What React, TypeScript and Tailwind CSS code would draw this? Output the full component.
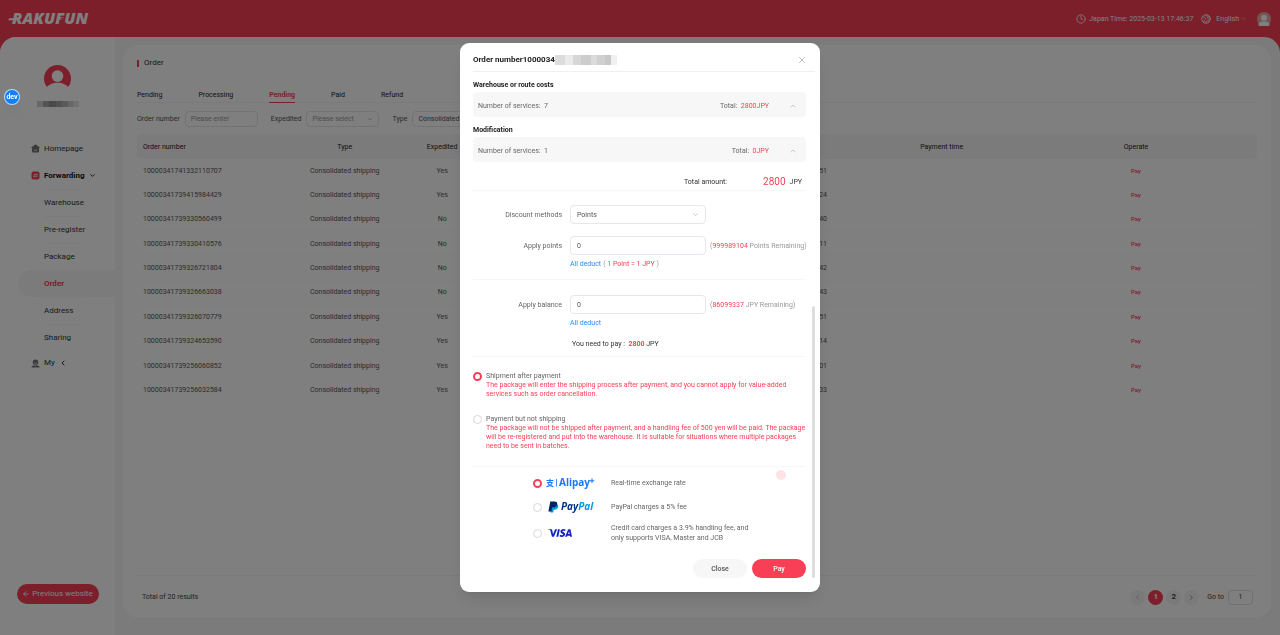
import React, { useState } from "react";
import { ArrowLeft, ChevronDown, ChevronLeft, ChevronRight, ChevronUp, Clock, X } from "lucide-react";
import { SiVisa } from "react-icons/si";

type OrderRow = {
  id: string;
  expedited: boolean;
  createdAt: string;
};

const orders: OrderRow[] = [
  { id: "10000341741332110707", expedited: true, createdAt: "2025-03-07 16:21:51" },
  { id: "10000341739415984429", expedited: true, createdAt: "2025-02-13 12:06:24" },
  { id: "10000341739330560499", expedited: false, createdAt: "2025-02-12 12:22:40" },
  { id: "10000341739330410576", expedited: false, createdAt: "2025-02-12 12:20:11" },
  { id: "10000341739326721804", expedited: false, createdAt: "2025-02-12 11:18:42" },
  { id: "10000341739326663038", expedited: false, createdAt: "2025-02-12 11:17:43" },
  { id: "10000341739326070779", expedited: true, createdAt: "2025-02-12 11:07:51" },
  { id: "10000341739324653590", expedited: true, createdAt: "2025-02-12 10:44:14" },
  { id: "10000341739256060852", expedited: true, createdAt: "2025-02-11 15:41:01" },
  { id: "10000341739256032584", expedited: true, createdAt: "2025-02-11 15:40:33" },
];

const subMenu = ["Warehouse", "Pre-register", "Package", "Order", "Address", "Sharing"];

const tabs = ["Pending", "Processing", "Pending", "Paid", "Refund"];
const activeTab = 2;

function Logo() {
  return (
    <svg width="92" height="26" viewBox="0 -4 92 26" role="img" aria-label="Rakufun">
      <text
        x="4"
        y="14"
        fill="#fff"
        fontFamily="'Open Sans', sans-serif"
        fontSize="16"
        fontWeight="800"
        fontStyle="italic"
      >
        RAKUFUN
      </text>
      <path d="M1 8.200h7l-.6 2H.4z" fill="#fff" />
      <circle cx="54" cy="8.600" r="1.200" fill="#f93f55" />
    </svg>
  );
}

function UserAvatar({ size, color, face }: { size: number; color: string; face: string }) {
  return (
    <svg width={size} height={size} viewBox="0 0 28 28" aria-hidden="true">
      <circle cx="14" cy="14" r="14" fill={color} />
      <circle cx="14" cy="11.500" r="6" fill={face} />
      <path d="M2.500 24C4 20.500 9 18.500 14 18.500S24 20.500 25.500 24L24 28H4z" fill={face} />
    </svg>
  );
}

function Globe() {
  return (
    <svg width="10" height="10" viewBox="0 0 20 20" fill="none" stroke="#fff" strokeWidth="1.800" aria-hidden="true">
      <circle cx="10" cy="10" r="8.500" />
      <path d="M3 6c4 0 6 1 6 3.500S5 13 6 17M17.500 6c-3-1-5 0-4 2.500s4 1.500 5 2M9 2.500c1 2 3 2 5 1M10 18c0-4 2-5.500 6-4" />
    </svg>
  );
}

function HomeIcon() {
  return (
    <svg width="9" height="9" viewBox="0 0 18 18" aria-hidden="true">
      <path d="M9 .5 17.500 7c.4.400.3 1-.3 1H16v7.500c0 1-.6 1.500-1.500 1.500h-11C2.600 17 2 16.500 2 15.500V8H.8C.2 8 .1 7.400.5 7z" fill="#777" />
      <path d="M6 12.500h6" stroke="#fff" strokeWidth="1.500" />
    </svg>
  );
}

function ForwardIcon() {
  return (
    <svg width="9" height="9" viewBox="0 0 18 18" aria-hidden="true">
      <rect x="1" y="1" width="16" height="16" rx="4" fill="#f93f55" />
      <path d="M5 7.500h8L10.500 5M13 10.500H5L7.500 13" stroke="#fff" strokeWidth="1.600" fill="none" />
    </svg>
  );
}

function MyIcon() {
  return (
    <svg width="9" height="9" viewBox="0 0 18 18" aria-hidden="true">
      <circle cx="9" cy="6.500" r="5.500" fill="#777" />
      <path d="M6 7.500c1.500 2 4.500 2 6 0" stroke="#fff" strokeWidth="1.300" fill="none" />
      <path d="M1 17c0-3 2-4 4-4h8c2 0 4 1 4 4z" fill="#777" />
    </svg>
  );
}

function Header() {
  return (
    <header className="flex h-[37px] items-center justify-between pr-[9px] pl-2">
      <Logo />
      <div className="flex items-center text-white">
        <Clock size={10} strokeWidth={2} />
        <span className="ml-[3px]">Japan Time: 2025-03-13 17:46:37</span>
        <span className="ml-2">
          <Globe />
        </span>
        <button type="button" className="ml-[5px] flex items-center gap-px">
          English
          <ChevronDown size={7} strokeWidth={1.5} />
        </button>
        <span className="ml-[10px]">
          <UserAvatar size={14} color="#e8a9a9" face="#fff" />
        </span>
      </div>
    </header>
  );
}

function Sidebar() {
  return (
    <aside className="flex w-[115px] shrink-0 flex-col bg-white text-[8px] text-[#333]">
      <div className="flex h-[98px] flex-col items-center pt-7">
        <UserAvatar size={27} color="#f93f55" face="#fff" />
        {/* masked user name */}
        <div className="mt-[9px] flex h-[6px]">
          <span className="w-[6px] bg-[#d2d2d2]" />
          <span className="w-[6px] bg-[#a8a8a8]" />
          <span className="w-[7px] bg-[#929292]" />
          <span className="w-[6px] bg-[#a2a2a2]" />
          <span className="w-[6px] bg-[#b6b6b6]" />
          <span className="w-[5px] bg-[#cecece]" />
          <span className="w-[6px] bg-[#e2e2e2]" />
        </div>
      </div>

      <nav>
        <a href="#home" className="flex h-[27px] items-center gap-1 pl-[31px]">
          <HomeIcon />
          Homepage
        </a>
        <a href="#forwarding" className="flex h-[27px] items-center gap-1 pl-[31px] font-bold text-[#111]">
          <ForwardIcon />
          Forwarding
          <ChevronDown size={7} strokeWidth={3} />
        </a>
        {subMenu.map((item) =>
          item === "Order" ? (
            <a
              key={item}
              href="#order"
              className="ml-[18px] flex h-[27px] items-center rounded-l-full bg-[#f7f7f7] pl-[26px] font-bold text-[#f93f55]"
            >
              {item}
            </a>
          ) : (
            <a key={item} href={`#${item.toLowerCase()}`} className="flex h-[27px] flex-col pl-[44px]">
              <span className="w-[39px] border-t border-[#f7f7f7]" />
              <span className="flex flex-1 items-center whitespace-nowrap">{item}</span>
            </a>
          )
        )}
        <a href="#my" className="flex h-6 items-center gap-1 pl-[31px]">
          <MyIcon />
          My
          <ChevronLeft size={8} strokeWidth={3} />
        </a>
      </nav>

      <button
        type="button"
        className="mx-auto mt-auto mb-[31px] flex h-5 w-[82px] items-center justify-center gap-[2px] rounded-full bg-[#f93f55] text-white"
      >
        <ArrowLeft size={8} strokeWidth={2.5} />
        Previous website
      </button>
    </aside>
  );
}

function FilterSelect({ id, value, muted }: { id: string; value: string; muted?: boolean }) {
  return (
    <span className="relative flex">
      <select
        id={id}
        defaultValue={value}
        className={`h-4 w-[73px] appearance-none rounded-[4px] border border-[#e4e7ed] bg-white pr-3 pl-[5px] ${
          muted ? "text-[#999]" : "text-[#555]"
        }`}
      >
        <option>{value}</option>
      </select>
      <ChevronDown size={8} strokeWidth={1.5} className="absolute top-1 right-[5px] text-[#999]" />
    </span>
  );
}

function Filters() {
  return (
    <div className="mt-2 flex h-4 items-center text-[#555]">
      <label htmlFor="f-number">Order number</label>
      <input
        id="f-number"
        placeholder="Please enter"
        className="ml-[5px] h-4 w-[73px] rounded-[4px] border border-[#e4e7ed] pl-[5px] placeholder:text-[#999]"
      />
      <label htmlFor="f-expedited" className="mr-[5px] ml-[13px]">
        Expedited
      </label>
      <FilterSelect id="f-expedited" value="Please select" muted />
      <label htmlFor="f-type" className="mr-[5px] ml-[13px]">
        Type
      </label>
      <FilterSelect id="f-type" value="Consolidated shipping" />
    </div>
  );
}

function OrderTable() {
  return (
    <table className="mt-[7px] h-[269px] w-full table-fixed text-center text-[#555]">
      <colgroup>
        <col className="w-[14.2%]" />
        <col className="w-[8.7%]" />
        <col className="w-[8.7%]" />
        <col className="w-[20.6%]" />
        <col className="w-[13.1%]" />
        <col className="w-[13.1%]" />
        <col className="w-[21.6%]" />
      </colgroup>
      <thead>
        <tr className="h-[25px] bg-[#f7f7f7] text-[#222]">
          <th className="rounded-l-[5px] pl-[6px] text-left font-normal">Order number</th>
          <th className="font-normal">Type</th>
          <th className="font-normal">Expedited</th>
          <th />
          <th />
          <th className="font-normal">Payment time</th>
          <th className="rounded-r-[5px] font-normal">Operate</th>
        </tr>
      </thead>
      <tbody>
        {orders.map((order) => (
          <tr key={order.id} className="border-b border-[#fafafa]">
            <td className="pl-[6px] text-left">{order.id}</td>
            <td className="whitespace-nowrap">Consolidated shipping</td>
            <td>{order.expedited ? "Yes" : "No"}</td>
            <td />
            <td className="whitespace-nowrap">{order.createdAt}</td>
            <td />
            <td>
              <button type="button" className="text-[6px] font-medium text-[#f93f55]">
                Pay
              </button>
            </td>
          </tr>
        ))}
      </tbody>
    </table>
  );
}

function Pagination() {
  const circle = "flex size-[15px] items-center justify-center rounded-full";
  return (
    <div className="mt-auto flex h-[43px] items-center border-t border-[#f4f4f4] pr-1 pl-[5px] text-[#444]">
      <span className="mr-auto">Total of 20 results</span>
      <div className="flex gap-[3px] text-[8px] font-bold">
        <button type="button" aria-label="Previous page" className={`${circle} bg-[#f4f4f5] text-[#999]`}>
          <ChevronLeft size={7} />
        </button>
        <button type="button" className={`${circle} bg-[#f93f55] text-white`}>
          1
        </button>
        <button type="button" className={`${circle} bg-[#f4f4f5]`}>
          2
        </button>
        <button type="button" aria-label="Next page" className={`${circle} bg-[#f4f4f5]`}>
          <ChevronRight size={7} />
        </button>
      </div>
      <label htmlFor="goto" className="mr-1 ml-2">
        Go to
      </label>
      <input id="goto" defaultValue="1" className="h-[15px] w-[25px] rounded-[4px] border border-[#dcdfe6] text-center" />
    </div>
  );
}

function OrderPage() {
  return (
    <main className="flex min-w-0 flex-1 flex-col pt-2 pr-[9px] pb-[17px] pl-2">
      <section className="flex flex-1 flex-col rounded-[16px] bg-white px-[14px] pt-3">
        <h1 className="flex h-3 items-center gap-[5px] text-[8px] text-[#333]">
          <span className="h-[7px] w-[2px] bg-[#f93f55]" />
          Order
        </h1>
        <div className="mt-5 flex h-[14px] gap-9 border-b border-[#f4f4f4] text-[#222]">
          {tabs.map((tab, i) => (
            <button
              key={i}
              type="button"
              className={
                i === activeTab
                  ? "h-[14px] border-b border-[#f93f55] pb-[2px] font-bold text-[#f93f55]"
                  : "h-[14px] pb-[2px]"
              }
            >
              {tab}
            </button>
          ))}
        </div>
        <Filters />
        <OrderTable />
        <Pagination />
      </section>
    </main>
  );
}

function Radio({
  id,
  name,
  checked,
  onChange,
}: {
  id: string;
  name: string;
  checked: boolean;
  onChange: () => void;
}) {
  return (
    <input
      id={id}
      type="radio"
      name={name}
      checked={checked}
      onChange={onChange}
      className="size-[9px] shrink-0 appearance-none rounded-full border border-[#d4d7de] bg-white checked:border-2 checked:border-[#f93f55]"
    />
  );
}

function CostBox({ title, count, total }: { title: string; count: number; total: string }) {
  return (
    <>
      <h3 className="flex h-5 items-center pt-[5px] font-bold text-[#222]">{title}</h3>
      <div className="flex h-[25px] items-center rounded-[4px] bg-[#f7f7f7] px-[5px] pt-[2px] text-[#666]">
        <span className="mr-auto">Number of services:&nbsp; {count}</span>
        <span>
          Total:&nbsp; <span className="text-[#f93f55]">{total}</span>
        </span>
        <button type="button" aria-label={`Toggle ${title}`} className="mr-1 ml-5 text-[#999]">
          <ChevronUp size={8} strokeWidth={1.5} />
        </button>
      </div>
    </>
  );
}

function AlipayLogo() {
  return (
    <svg width="52" height="18" viewBox="0 -3 52 18" role="img" aria-label="Alipay+">
      <text x="0" y="9" fontFamily="'Noto Sans CJK SC', sans-serif" fontWeight="700" fontSize="8" fill="#1677ff">
        支
      </text>
      <path d="M10.500 2v7.500" stroke="#1677ff" strokeWidth=".8" />
      <text x="13" y="9" fontFamily="'Open Sans', sans-serif" fontWeight="700" fontSize="10" fill="#1677ff">
        Alipay
      </text>
      <path d="M46 1.500v4.600M43.700 3.800h4.600" stroke="#1677ff" strokeWidth="1.100" />
    </svg>
  );
}

function PaypalLogo() {
  return (
    <svg width="52" height="18" viewBox="0 -3 52 18" role="img" aria-label="PayPal">
      <path d="M3.800 3H8c2 0 2.600 1.400 2.200 3-.5 2-1.900 2.700-3.600 2.700h-.9L5.200 11.600H2.500z" fill="#009cde" />
      <path d="M2.300.5H6.500c2.200 0 3 1.200 2.600 3C8.600 5.700 7.200 6.500 5.200 6.500H4.100L3.300 10.400H.4z" fill="#012169" />
      <text x="13" y="9" fontFamily="'Open Sans', sans-serif" fontWeight="700" fontStyle="italic" fontSize="10" fill="#003087">
        Pay
        <tspan fill="#009cde">Pal</tspan>
      </text>
    </svg>
  );
}

const shippingOptions = [
  {
    id: "ship",
    title: "Shipment after payment",
    note: "The package will enter the shipping process after payment, and you cannot apply for value-added services such as order cancellation.",
  },
  {
    id: "hold",
    title: "Payment but not shipping",
    note: "The package will not be shipped after payment, and a handling fee of 500 yen will be paid. The package will be re-registered and put into the warehouse. It is suitable for situations where multiple packages need to be sent in batches.",
  },
];

const payMethods = [
  { id: "alipay", logo: <AlipayLogo />, note: "Real-time exchange rate" },
  { id: "paypal", logo: <PaypalLogo />, note: "PayPal charges a 5% fee" },
  {
    id: "visa",
    logo: <SiVisa size={24} color="#1423c8" aria-label="VISA" />,
    note: "Credit card charges a 3.9% handling fee, and only supports VISA, Master and JCB",
  },
];

function PaymentForm() {
  const [points, setPoints] = useState("0");
  const [balance, setBalance] = useState("0");
  const field = "h-[19px] w-[136px] shrink-0 rounded-[4px] border border-[#e4e7ed] bg-white pl-[6px] text-[#555]";

  return (
    <div className="text-[#666]">
      <div className="flex items-center pt-[14px]">
        <label htmlFor="discount" className="w-[97px] shrink-0 pr-2 text-right">
          Discount methods
        </label>
        <span className="relative flex">
          <select id="discount" defaultValue="Points" className={`${field} appearance-none`}>
            <option>Points</option>
          </select>
          <ChevronDown size={9} strokeWidth={1.5} className="absolute top-[5px] right-[6px] text-[#aaa]" />
        </span>
      </div>

      <div className="flex items-center pt-3">
        <label htmlFor="points" className="w-[97px] shrink-0 pr-2 text-right">
          Apply points
        </label>
        <input id="points" value={points} onChange={(e) => setPoints(e.target.value)} className={field} />
        <span className="ml-1 whitespace-nowrap text-[#999]">
          (<span className="text-[#f93f55]">999989104</span> Points Remaining)
        </span>
      </div>
      <div className="flex h-[25px] items-start gap-[2px] border-b border-[#f7f7f7] pt-1 pl-[97px] leading-[10px] text-[#999]">
        <button type="button" className="text-[#2490f8]" onClick={() => setPoints("2800")}>
          All deduct
        </button>
        <span>
          ( <span className="text-[#f93f55]">1 Point = 1 JPY</span> )
        </span>
      </div>

      <div className="flex items-center pt-[15px]">
        <label htmlFor="balance" className="w-[97px] shrink-0 pr-2 text-right">
          Apply balance
        </label>
        <input id="balance" value={balance} onChange={(e) => setBalance(e.target.value)} className={field} />
        <span className="ml-1 whitespace-nowrap text-[#999]">
          (<span className="text-[#f93f55]">86099337</span> JPY Remaining)
        </span>
      </div>
      <div className="flex pt-1 pl-[97px] leading-[10px]">
        <button type="button" className="text-[#2490f8]" onClick={() => setBalance("2800")}>
          All deduct
        </button>
      </div>
      <p className="h-[29px] border-b border-[#f7f7f7] pt-[11px] pl-[99px] leading-[10px] text-[#333]">
        You need to pay :&nbsp; <strong className="font-bold text-[#f93f55]">2800</strong> JPY
      </p>
    </div>
  );
}

function PaymentDialog() {
  const [shipping, setShipping] = useState("ship");
  const [method, setMethod] = useState("alipay");

  return (
    <div className="fixed inset-0 flex items-center justify-center bg-black/50">
      <div
        role="dialog"
        aria-modal="true"
        aria-labelledby="dialog-title"
        className="relative w-[360px] rounded-[9px] bg-white pr-[14px] pb-[14px] pl-[13px] shadow-lg"
      >
        <div className="-mr-[9px] flex h-[29px] items-center border-b border-[#f0f0f0] pt-[5px] pr-2">
          <h2 id="dialog-title" className="text-[8px] font-bold text-[#222]">
            Order number1000034
          </h2>
          {/* masked digits */}
          <div className="mr-auto flex h-[10px]">
            <span className="w-[10px] bg-[#dcdcdc]" />
            <span className="w-[8px] bg-[#eaeaea]" />
            <span className="w-[8px] bg-[#d6d6d6]" />
            <span className="w-[10px] bg-[#cccccc]" />
            <span className="w-[6px] bg-[#dadada]" />
            <span className="w-[8px] bg-[#d0d0d0]" />
            <span className="w-[6px] bg-[#c8c8c8]" />
            <span className="w-[6px] bg-[#f0f0f0]" />
          </div>
          <button type="button" aria-label="Close dialog" className="text-[#999]">
            <X size={10} strokeWidth={1.5} />
          </button>
        </div>

        <CostBox title="Warehouse or route costs" count={7} total="2800JPY" />
        <CostBox title="Modification" count={1} total="0JPY" />

        <div className="flex h-[29px] items-center justify-end border-b border-[#f7f7f7] pt-[11px] pr-1 text-[#333]">
          Total amount:
          <span className="mr-1 ml-9 text-[10px] text-[#f93f55]">2800</span>
          JPY
        </div>

        <PaymentForm />

        <div className="flex h-[110px] flex-col gap-4 border-b border-[#f7f7f7] pt-[15px]">
          {shippingOptions.map((option) => (
            <div key={option.id} className="flex gap-1 leading-[9px]">
              <Radio
                id={option.id}
                name="shipping"
                checked={shipping === option.id}
                onChange={() => setShipping(option.id)}
              />
              <label htmlFor={option.id}>
                <span className="block text-[#666]">{option.title}</span>
                <span className="block text-[#f93f55]">{option.note}</span>
              </label>
            </div>
          ))}
        </div>

        <div className="flex flex-col pt-1 pl-[60px] text-[#666]">
          {payMethods.map((item) => (
            <div key={item.id} className="flex h-6 items-center last:h-7">
              <Radio id={item.id} name="method" checked={method === item.id} onChange={() => setMethod(item.id)} />
              <label htmlFor={item.id} className="flex items-center leading-[10px]">
                <span className={item.id === "alipay" ? "w-[69px] pl-1" : "w-[69px] pl-[6px]"}>{item.logo}</span>
                <span className="w-[144px]">{item.note}</span>
              </label>
            </div>
          ))}
        </div>

        <div className="mt-3 flex justify-end gap-[5px] font-medium">
          <button type="button" className="h-[19px] w-[54px] rounded-full bg-[#f7f7f7] text-[#555]">
            Close
          </button>
          <button type="button" className="h-[19px] w-[54px] rounded-full bg-[#f93f55] text-white">
            Pay
          </button>
        </div>

        {/* scroll thumb and pointer halo float over the dialog body */}
        <span className="absolute right-[5px] bottom-[14px] h-[272px] w-[3px] rounded-full bg-[#dddee0]" />
        <span className="absolute right-[34px] bottom-[112px] size-[10px] rounded-full bg-[#fde3e6]" />
      </div>
    </div>
  );
}

export default function App() {
  return (
    <div className="flex min-h-screen flex-col bg-[#f93f55] font-['Roboto','Noto_Sans',sans-serif] text-[7px] leading-[12px]">
      <Header />
      <div className="flex flex-1 overflow-hidden rounded-t-[16px] bg-[#f7f7f7]">
        <Sidebar />
        <OrderPage />
      </div>
      <PaymentDialog />
      <span className="fixed top-[89px] left-1 flex size-4 items-center justify-center rounded-full border border-white/70 bg-[#1080ff] text-[7px] font-bold text-white shadow-lg">
        dev
      </span>
    </div>
  );
}
